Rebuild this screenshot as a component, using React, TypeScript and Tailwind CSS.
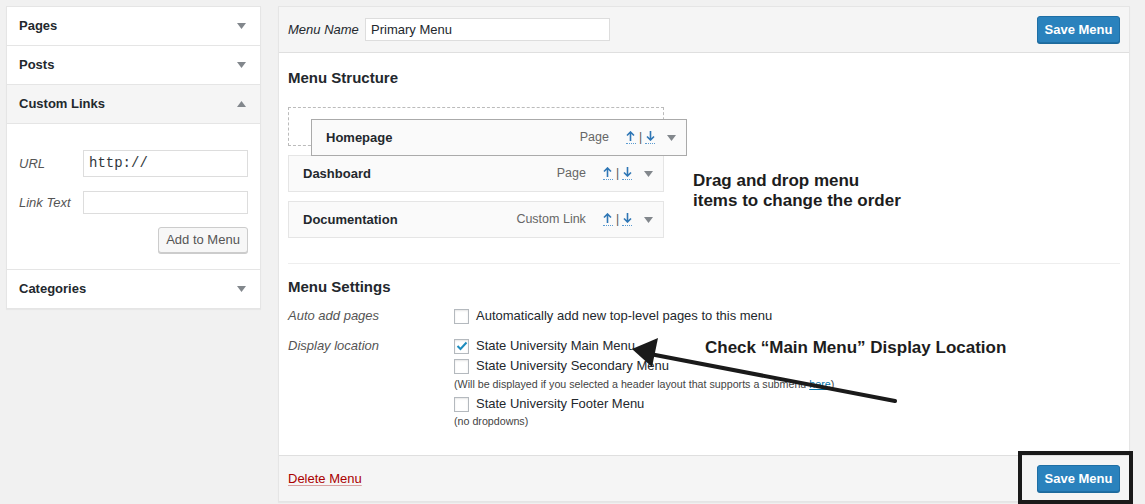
const Caret = ({ up = false }: { up?: boolean }) => (
  <svg width="9" height="6" viewBox="0 0 9 6" className="shrink-0">
    {up ? <path d="M0 6 L4.5 0 L9 6 Z" fill="#82878c" /> : <path d="M0 0 L9 0 L4.5 6 Z" fill="#82878c" />}
  </svg>
)

const MoveArrow = ({ down = false }: { down?: boolean }) => (
  <span className="flex flex-col items-center">
    <svg width="9" height="10" viewBox="0 0 9 10">
      {down ? (
        <path d="M4.5 0 V9 M1 5.5 L4.5 9 L8 5.5" stroke="#2e76b5" strokeWidth="1.6" fill="none" />
      ) : (
        <path d="M4.5 10 V1 M1 4.5 L4.5 1 L8 4.5" stroke="#2e76b5" strokeWidth="1.6" fill="none" />
      )}
    </svg>
    <span className="mt-[2px] w-[10px] border-t border-dotted border-[#5b9bd1]" />
  </span>
)

const Arrows = () => (
  <span className="flex items-center gap-[3px] leading-none">
    <MoveArrow />
    <span className="text-[12px] text-[#555] -mt-[2px]">|</span>
    <MoveArrow down />
  </span>
)

const MenuItem = ({ title, type, className = '' }: { title: string; type: string; className?: string }) => (
  <div className={`h-[37px] w-[376px] flex items-center justify-between pl-[14px] pr-[10px] bg-[#fafafa] border ${className}`}>
    <span className="text-[13px] font-bold text-[#23282d]">{title}</span>
    <span className="flex items-center gap-[17px]">
      <span className="text-[12.5px] text-[#666]">{type}</span>
      <span className="flex items-center gap-[12px]">
        <Arrows />
        <Caret />
      </span>
    </span>
  </div>
)

const SideSection = ({ title, open = false }: { title: string; open?: boolean }) => (
  <div className={`h-[39px] flex items-center justify-between px-[12px] border-b border-[#e5e5e5] ${open ? 'bg-[#f5f5f5]' : 'bg-white'}`}>
    <span className="text-[13px] font-bold text-[#23282d]">{title}</span>
    <span className="pr-[2px]"><Caret up={open} /></span>
  </div>
)

const Check = ({ checked = false }: { checked?: boolean }) => (
  <span className="w-[15px] h-[15px] border border-[#b4b9be] bg-white shadow-[inset_0_1px_2px_rgba(0,0,0,0.1)] flex items-center justify-center shrink-0">
    {checked && (
      <svg width="12" height="10" viewBox="0 0 12 10">
        <path d="M1.5 5 L4.5 8 L10.5 1.5" stroke="#1e8cbe" strokeWidth="2" fill="none" />
      </svg>
    )}
  </span>
)

const SaveButton = () => (
  <button className="w-[83px] h-[27px] rounded-[3px] bg-[#2a82bd] border border-[#1f6fa5] text-white text-[13px] font-bold shadow-[0_1px_0_#1d6a9c]">
    Save Menu
  </button>
)

export default function App() {
  return (
    <div className="relative w-[1145px] h-[504px] overflow-hidden bg-[#f1f1f1] flex items-start gap-[17px] pl-[6px] pt-[6px] font-['Liberation_Sans',Arial,sans-serif] text-[#23282d]">
      {/* left column */}
      <div className="w-[255px] bg-white border border-[#e5e5e5] border-b-0 shadow-[0_1px_1px_rgba(0,0,0,0.04)]">
        <SideSection title="Pages" />
        <SideSection title="Posts" />
        <SideSection title="Custom Links" open />
        <div className="h-[146px] border-b border-[#e5e5e5] px-[12px] pt-[26px]">
          <div className="flex items-center">
            <span className="w-[64px] text-[13px] italic text-[#555]">URL</span>
            <div className="flex-1 h-[27px] border border-[#ddd] flex items-center px-[5px] font-['Liberation_Mono',monospace] text-[14px] text-[#32373c]">http://</div>
          </div>
          <div className="flex items-center mt-[14px]">
            <span className="w-[64px] text-[13px] italic text-[#555]">Link Text</span>
            <div className="flex-1 h-[23px] border border-[#ddd]" />
          </div>
          <div className="flex justify-end mt-[13px]">
            <button className="w-[90px] h-[26px] border border-[#ccc] rounded-[3px] bg-[#f7f7f7] text-[13px] text-[#555] shadow-[0_1px_0_#ccc]">Add to Menu</button>
          </div>
        </div>
        <SideSection title="Categories" />
      </div>

      {/* right column */}
      <div className="relative w-[852px] bg-white border border-[#e5e5e5] shadow-[0_1px_1px_rgba(0,0,0,0.04)]">
        <div className="h-[46px] bg-[#f5f5f5] border-b border-[#dfdfdf] flex items-center justify-between pl-[9px] pr-[9px]">
          <div className="flex items-center">
            <span className="w-[77px] text-[13px] italic">Menu Name</span>
            <div className="w-[245px] h-[23px] bg-white border border-[#ddd] flex items-center px-[5px] text-[13px]">Primary Menu</div>
          </div>
          <SaveButton />
        </div>

        <div className="h-[402px] px-[9px] pt-[16px]">
          <h3 className="text-[15px] font-semibold leading-[17px]">Menu Structure</h3>
          <div className="relative mt-[21px]">
            <div className="h-[39px] w-[376px] border border-dashed border-[#bbb]" />
            <MenuItem title="Homepage" type="Page" className="absolute left-[23px] top-[12px] border-[#aaa] bg-[#f6f6f6]" />
            <MenuItem title="Dashboard" type="Page" className="mt-[9px] border-[#e5e5e5]" />
            <MenuItem title="Documentation" type="Custom Link" className="mt-[9px] border-[#e5e5e5]" />
          </div>

          <div className="mt-[25px] border-t border-[#eee]" />

          <h3 className="mt-[14px] text-[15px] font-semibold leading-[17px]">Menu Settings</h3>
          <div className="flex mt-[13px] text-[13px]">
            <span className="w-[166px] italic text-[#555] leading-[16px]">Auto add pages</span>
            <label className="flex items-center gap-[7px] leading-[16px]">
              <Check />
              <span>Automatically add new top-level pages to this menu</span>
            </label>
          </div>
          <div className="flex mt-[14px] text-[13px]">
            <span className="w-[166px] italic text-[#555] leading-[16px]">Display location</span>
            <div className="flex flex-col">
              <label className="flex items-center gap-[7px] leading-[16px]">
                <Check checked />
                <span>State University Main Menu</span>
              </label>
              <label className="flex items-center gap-[7px] leading-[16px] mt-[4px]">
                <Check />
                <span>State University Secondary Menu</span>
              </label>
              <span className="text-[10.7px] leading-[14px] mt-[3px] text-[#444]">
                (Will be displayed if you selected a header layout that supports a submenu <span className="text-[#0073aa] underline">here</span>)
              </span>
              <label className="flex items-center gap-[7px] leading-[16px] mt-[5px]">
                <Check />
                <span>State University Footer Menu</span>
              </label>
              <span className="text-[10.7px] leading-[14px] mt-[2px] text-[#444]">(no dropdowns)</span>
            </div>
          </div>
        </div>

        <div className="h-[46px] bg-[#f5f5f5] border-t border-[#dfdfdf] flex items-center justify-between pl-[9px] pr-[9px]">
          <a className="text-[13px] text-[#a00] underline decoration-[#d9a0a0] underline-offset-2">Delete Menu</a>
          <SaveButton />
        </div>
      </div>

      {/* annotations */}
      <div className="absolute left-[693px] top-[171px] text-[17px] font-bold leading-[20px] text-[#1d1d1d]">
        Drag and drop menu
        <br />
        items to change the order
      </div>
      <div className="absolute left-[705px] top-[338px] text-[17px] font-bold leading-[20px] text-[#1d1d1d]">
        Check “Main Menu” Display Location
      </div>
      <svg className="absolute left-0 top-0 pointer-events-none" width="1145" height="504" viewBox="0 0 1145 504">
        <line x1="895" y1="401" x2="650" y2="354" stroke="#1a1a1a" strokeWidth="4" strokeLinecap="round" />
        <path d="M632 349 L658 338 L652 367 Z" fill="#1a1a1a" />
      </svg>
      <div className="absolute left-[1018px] top-[451px] w-[115px] h-[53px] border-[4px] border-[#1a1a1a]" />
    </div>
  )
}
